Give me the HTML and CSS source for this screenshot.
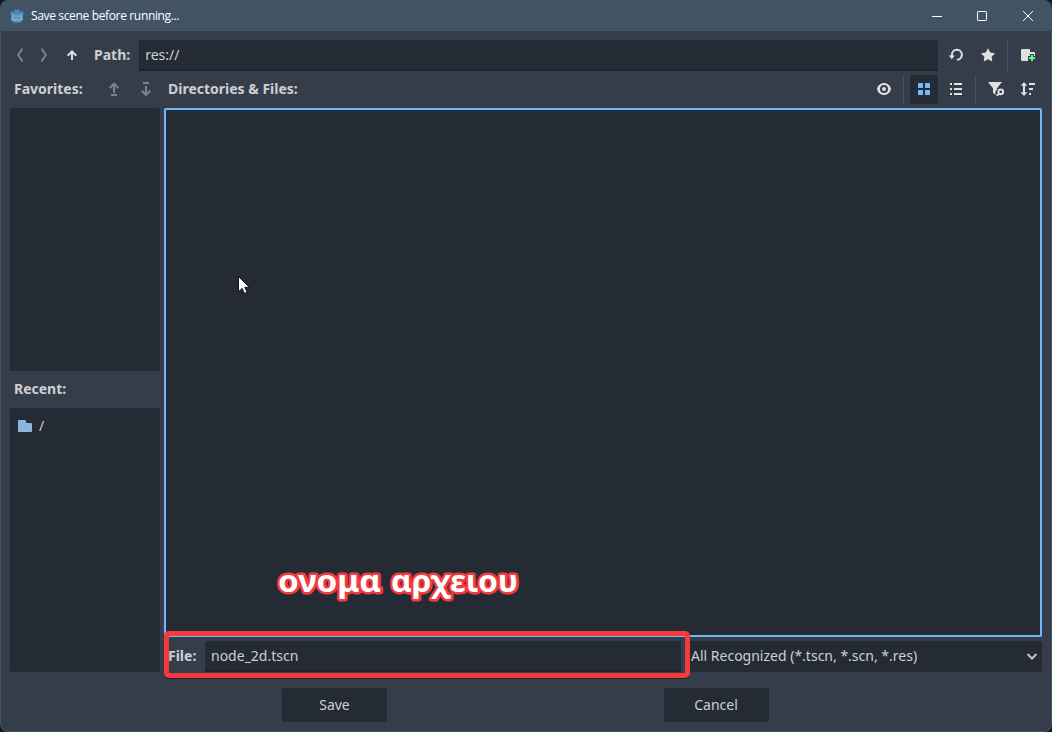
FILE: index.html
```html
<!DOCTYPE html>
<html lang="en">
<head>
<meta charset="utf-8">
<title>Save scene before running...</title>
<link rel="stylesheet" href="styles.css">
</head>
<body>
<div class="window">
  <header class="titlebar">
    <svg class="logo" viewBox="0 0 16 16"><path fill="#478cbf" d="M1 5l2-2 1.500 1 1-.5L5.700 1 8 2l2.300-1 .2 2.500 1 .5L13 3l2 2-1 2v5c-1 2-3.500 3-6 3s-5-1-6-3V7z"/><circle cx="4.700" cy="8" r="1.500" fill="#c9dcea"/><circle cx="11.300" cy="8" r="1.500" fill="#c9dcea"/><path fill="#414042" d="M4.200 7.300h1.200v1.400H4.200zM10.600 7.300h1.200v1.400h-1.200z"/><path stroke="#c9dcea" fill="none" stroke-width=".7" d="M8 7.500v2M2 11h2.500l.5 1.300h1.600l.4-1h2l.4 1H11l.5-1.300H14"/></svg>
    <span class="title">Save scene before running...</span>
    <div class="controls">
      <svg class="minimize" viewBox="0 0 12 12"><path d="M1 6.500h10"/></svg>
      <svg viewBox="0 0 12 12"><rect x="1.500" y="1.500" width="9" height="9" rx=".7"/></svg>
      <svg viewBox="0 0 12 12"><path d="M1 1l10 10M11 1L1 11"/></svg>
    </div>
  </header>

  <main class="content">
    <div class="pathbar">
      <svg class="icon dim back" viewBox="0 0 16 16"><path class="line" d="M10.500 1.500L6.200 8l4.300 6.500"/></svg>
      <svg class="icon dim forward" viewBox="0 0 16 16"><path class="line" d="M5.500 1.500L9.800 8l-4.300 6.500"/></svg>
      <svg class="icon up" viewBox="0 0 16 16"><path class="line" d="M8 13V5M3.700 8.700L8 4.400l4.300 4.300"/></svg>
      <span class="label">Path:</span>
      <div class="field path">res://</div>
      <svg class="icon reload" viewBox="0 0 16 16"><path class="line" d="M3.900 9V7.800a5 5 0 1 1 5 5"/><path d="M.8 8.500h6l-3 3.800z"/></svg>
      <svg class="icon star" viewBox="0 0 16 16"><path d="M8 1.300l2.200 4.200 4.800.8-3.400 3.400.7 4.700L8 12.300l-4.300 2.100.7-4.700L1 6.300l4.800-.8z"/></svg>
      <i class="sep"></i>
      <svg class="icon newdir" viewBox="0 0 16 16"><path d="M2 2a1 1 0 0 0-1 1v10a1 1 0 0 0 1 1h6v-1H8V9h2V7h4v2h1V6a1 1 0 0 0-1-1h-4V3a1 1 0 0 0-1-1z"/><path fill="#5fff76" d="M11 8h2v2h2v2h-2v2h-2v-2H9v-2h2z"/></svg>
    </div>

    <div class="columns">
      <aside class="side">
        <div class="head">
          <span class="label">Favorites:</span>
          <svg class="icon dim fav-up" viewBox="0 0 16 16"><path class="line" d="M8 12V3M3.700 7L8 2.700 12.300 7M5 14h6"/></svg>
          <svg class="icon dim fav-down" viewBox="0 0 16 16"><path class="line" d="M8 5v8M3.700 9.700L8 14l4.300-4.300M5 2h6"/></svg>
        </div>
        <div class="list favorites"></div>
        <div class="head recent"><span class="label">Recent:</span></div>
        <div class="list recents">
          <div class="entry"><svg class="icon" viewBox="0 0 16 16"><path fill="#88b6dd" d="M2 2a1 1 0 0 0-1 1v10a1 1 0 0 0 1 1h12a1 1 0 0 0 1-1V6a1 1 0 0 0-1-1h-4a1 1 0 0 1-1-1V3a1 1 0 0 0-1-1z"/></svg><span>/</span></div>
        </div>
      </aside>

      <section class="files">
        <div class="head tools">
          <span class="label">Directories &amp; Files:</span>
          <svg class="icon eye" viewBox="0 0 16 16"><path fill-rule="evenodd" d="M8 2C4.500 2 1.800 4.500 1 8c.8 3.500 3.500 6 7 6s6.200-2.500 7-6c-.8-3.500-3.500-6-7-6zm0 2a4 4 0 1 1 0 8 4 4 0 0 1 0-8zm0 2a2 2 0 1 0 0 4 2 2 0 0 0 0-4z"/></svg>
          <i class="sep"></i>
          <span class="toggle"><svg class="icon" viewBox="0 0 16 16"><path d="M2 2h5v5H2zM9 2h5v5H9zM2 9h5v5H2zM9 9h5v5H9z"/></svg></span>
          <svg class="icon rows" viewBox="0 0 16 16"><path d="M2 2h2v2H2zM6 2h8v2H6zM2 7h2v2H2zM6 7h8v2H6zM2 12h2v2H2zM6 12h8v2H6z"/></svg>
          <i class="sep"></i>
          <svg class="icon filter" viewBox="0 0 16 16"><path d="M0 1h14L9 7.300v1.200a4 4 0 0 0-1 5.700L5 12V7.300z"/><circle class="line" cx="12.800" cy="10.800" r="2.400"/><path class="line" d="M11 12.600l-2.200 2.200"/></svg>
          <svg class="icon sort" viewBox="0 0 16 16"><path d="M4 1l3.300 3.700H5v6.600h2.300L4 15 .7 11.300H3V4.700H.7zM9 2h6v2H9zM9 7h4v2H9zM9 12h2v2H9z"/></svg>
        </div>
        <div class="browser"></div>
        <div class="filebar">
          <span class="label">File:</span>
          <div class="field name">node_2d.tscn</div>
          <div class="select"><span>All Recognized (*.tscn, *.scn, *.res)</span><svg class="icon" viewBox="0 0 16 16"><path class="line" d="M3.500 6L8 10.500 12.500 6"/></svg></div>
        </div>
      </section>
    </div>

    <footer class="actions"><div class="button">Save</div><div class="button cancel">Cancel</div></footer>
  </main>

  <div class="highlight"></div>
  <svg class="caption" viewBox="0 0 260 50"><text y="31"><tspan x="8" textLength="103" lengthAdjust="spacingAndGlyphs">ονομα</tspan> <tspan x="121" textLength="127" lengthAdjust="spacingAndGlyphs">αρχειου</tspan></text></svg>
  <svg class="cursor" viewBox="0 0 14 20"><path d="M1.500 1.500v15.300l3.600-3.400 2.400 5 2.600-1.200-2.300-4.900h4.500z"/></svg>
</div>
</body>
</html>
```
FILE: styles.css
```css
* { box-sizing: border-box; }
body {
  margin: 0;
  background: #15191f;
  font: 14px/20px "Noto Sans", sans-serif;
  color: #cdcfd2;
}
.window {
  position: relative;
  width: 1052px;
  height: 732px;
  border: 1px solid #425364;
  border-top: 0;
  border-radius: 8px;
  background: #363d4a;
  overflow: hidden;
}
.titlebar {
  display: flex;
  align-items: center;
  height: 31px;
  padding: 0 17px 0 8px;
  background: #425364;
  color: #fff;
}
.logo { width: 16px; height: 16px; margin-right: 6px; }
.title { font: 12px/16px "Open Sans", sans-serif; letter-spacing: -0.35px; white-space: nowrap; }
.controls { display: flex; gap: 34px; margin-left: auto; }
.controls svg { width: 12px; height: 12px; fill: none; stroke: #fff; stroke-width: 1; }
.controls .minimize { margin-right: -1px; }

.content { padding: 9px 9px 0; }
.icon { display: block; flex: none; width: 16px; height: 16px; fill: #e0e0e0; }
.icon .line { fill: none; stroke: #e0e0e0; stroke-width: 2; }
.dim { opacity: .42; }
.label { font-weight: 700; white-space: nowrap; }
.sep { flex: none; align-self: flex-start; width: 1px; height: 29px; background: #4b515d; }
.field {
  align-self: flex-start;
  height: 31px;
  padding: 5px 6px;
  background: #252b34;
  border-bottom: 2px solid #1e2229;
  border-radius: 2px 2px 0 0;
}

.pathbar { display: flex; align-items: center; height: 31px; padding: 0 0 1px 2px; }
.pathbar .sep { height: 31px; }
.forward { margin-left: 8px; }
.up { margin: 0 14px 0 12px; }
.path { width: 799px; margin-left: 9px; }
.reload { margin-left: 10px; }
.star { margin: 0 11px 0 16px; }
.newdir { margin-left: 12px; }

.columns { display: flex; gap: 4px; margin-top: 4px; }
.side { width: 150px; }
.head { display: flex; align-items: center; height: 29px; padding: 0 0 1px 4px; margin-bottom: 4px; }
.fav-up { margin-left: auto; }
.fav-down { margin: 0 6px 0 16px; }
.list { background: #252b34; border-radius: 2px; }
.favorites { height: 263px; }
.recent { margin: 4px 0; }
.recents { height: 264px; padding: 8px 7px; }
.entry { display: flex; align-items: center; gap: 6px; }

.files { width: 878px; }
.eye { margin: 0 11px 0 auto; }
.toggle { display: grid; place-items: center; align-self: flex-start; width: 28px; height: 29px; margin-left: 6px; padding-bottom: 1px; border-radius: 2px; background: #252b34; }
.toggle .icon { fill: #70bafa; }
.rows { margin: 0 11px 0 10px; }
.filter { margin-left: 12px; }
.sort { margin: 0 6px 0 16px; }
.browser { height: 529px; border: 2px solid #70bafa; border-radius: 2px; background: #252b34; }
.filebar { display: flex; align-items: center; height: 31px; margin-top: 4px; padding: 0 0 1px 4px; }
.name { width: 476px; margin: 0 4px 0 auto; }
.select {
  display: flex;
  align-items: center;
  align-self: flex-start;
  justify-content: space-between;
  width: 357px;
  height: 31px;
  padding: 0 2px 1px 6px;
  border-radius: 2px;
  background: #252b34;
}
.select .icon { opacity: .85; }

.actions { display: flex; gap: 277px; justify-content: center; margin-top: 16px; padding-right: 1px; }
.button { width: 105px; height: 34px; line-height: 34px; text-align: center; border-radius: 2px; background: #252b34; }
.cancel { padding-right: 1px; }

/* Annotations drawn over the dialog */
.highlight {
  position: absolute;
  left: 163px;
  top: 631px;
  width: 526px;
  height: 47px;
  border: 5px solid #f33b3d;
  border-radius: 5px;
  box-shadow: 0 1px 1px #20242b;
}
.caption { position: absolute; left: 269px; top: 561px; width: 260px; height: 50px; overflow: visible; }
.caption text {
  font: 700 30px "Noto Sans", sans-serif;
  fill: #fff;
  stroke: #f33b3d;
  stroke-width: 5px;
  stroke-linejoin: round;
  paint-order: stroke;
}
.cursor { position: absolute; left: 236px; top: 275px; width: 14px; height: 20px; }
.cursor path { fill: #fff; stroke: #111420; stroke-width: 1; }
```
